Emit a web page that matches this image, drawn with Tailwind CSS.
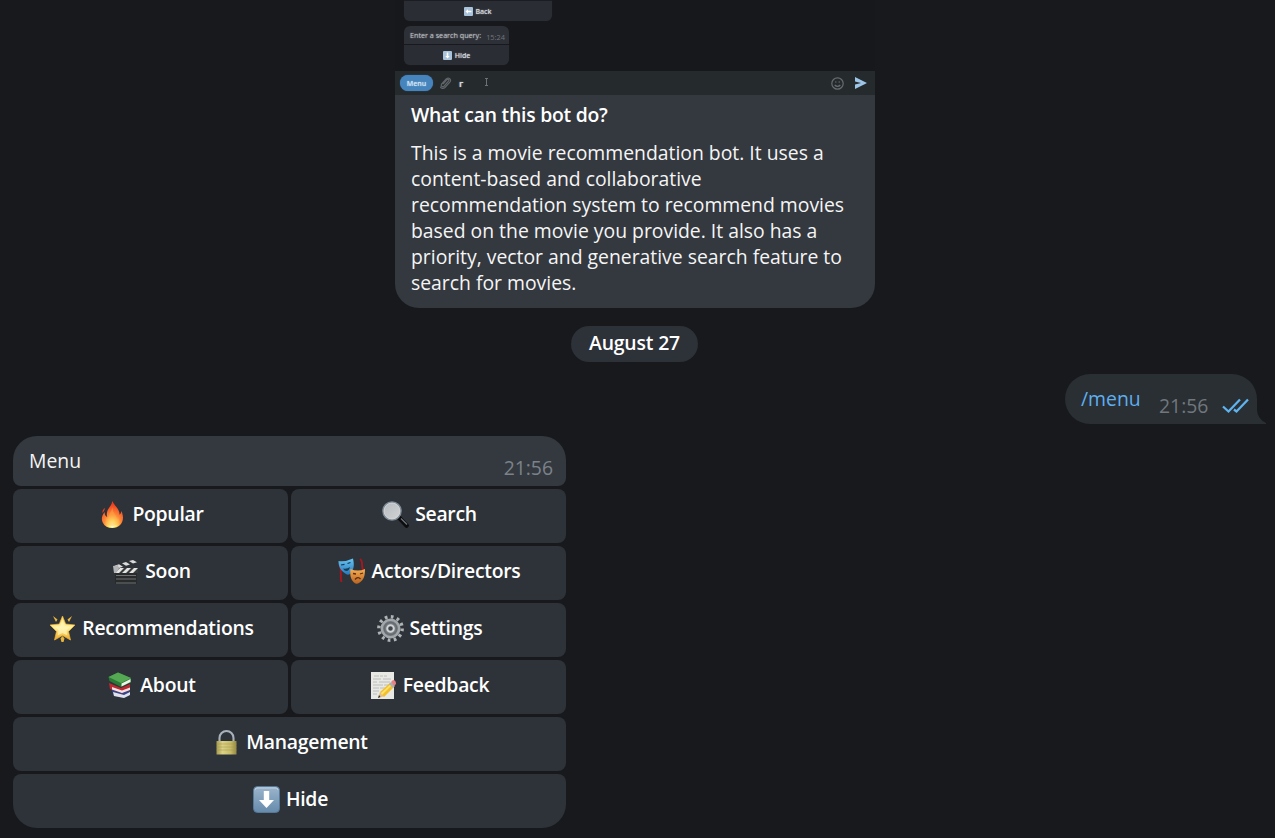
<!DOCTYPE html>
<html lang="en">
<head>
<meta charset="utf-8">
<title>Movie bot chat</title>
<script src="https://cdn.jsdelivr.net/npm/@tailwindcss/browser@4"></script>
</head>
<body class="bg-[#18191d]">
<main class="flex h-[838px] w-[1275px] flex-col overflow-hidden bg-[#18191d] font-['Open_Sans',sans-serif] text-[19.36px] leading-[26px] text-[#f5f5f5]">

  <!-- Bot description -->
  <section class="ml-[395px] h-[308px] w-[480px] shrink-0 overflow-hidden rounded-b-[24px] bg-[#34383f]">
    <div class="flex h-[95px] flex-col bg-[#17181c] text-[7px] font-semibold leading-none text-[#d2d5d9] [text-shadow:0_0_1.5px_rgb(255_255_255/0.55)]">
      <div class="ml-[9px] flex h-[21px] w-[148px] items-center justify-center gap-[2px] rounded-b-[6px] border-t border-[#1b1d22] bg-[#2a2d34] shadow-[0_0_1px_#2a2d34]">
        <svg class="size-[9px]" viewBox="0 0 9 9"><rect width="9" height="9" rx="1" fill="#a9c3da"/><path d="M1.5 4.5 4 2.3v1.4h3.4v1.6H4v1.4z" fill="#fff"/></svg>
        <span>Back</span>
      </div>
      <div class="mt-[5px] ml-[9px] flex h-[18px] w-[105px] justify-between rounded-t-[6px] bg-[#2d3036] pr-[4px] pl-[6px] font-normal">
        <span class="pt-[6px] text-[7.2px] whitespace-nowrap text-[#b9bcc0]">Enter a search query:</span>
        <span class="pt-[8px] text-[7.4px] text-[#70757c] [text-shadow:none]">15:24</span>
      </div>
      <div class="mt-px ml-[9px] flex h-[20px] w-[105px] items-center justify-center gap-[3px] rounded-b-[6px] bg-[#2a2d34] shadow-[0_0_1px_#2a2d34]">
        <svg class="size-[9px]" viewBox="0 0 9 9"><rect width="9" height="9" rx="1" fill="#a9c3da"/><path d="M4.5 7.6 2.3 5h1.4V1.5h1.6V5h1.4z" fill="#fff"/></svg>
        <span>Hide</span>
      </div>
      <div class="mt-auto flex h-[24px] items-center bg-[#252a2d] pl-[5px]">
        <span class="flex h-[16px] w-[33px] items-center justify-center rounded-full bg-[#4584bd] text-[7px] text-[#d3e5f5] shadow-[0_0_1px_#4584bd]">Menu</span>
        <svg class="ml-[6px] h-[14px] w-[13px]" viewBox="0 0 13 14" fill="none" stroke="#60656a" stroke-width="1.2"><path d="m4 8 4-4.3c1.3-1 2.4.4 1.5 1.5L5 10.2c-1.6 1.3-3.6-.4-2.3-2.2l4.5-5c2.6-2.4 5.6.7 3.6 3.2L6 11.5c-1.7 1.6-4.2 1-4.7-.8"/></svg>
        <span class="mt-[1px] ml-[7px] w-[5px] text-[9px] font-bold">г</span>
        <svg class="mb-[2px] ml-[20px] h-[8px] w-[5px]" viewBox="0 0 5 8" fill="none" stroke="#6c7175"><path d="M1 .5h3M2.500 .5v7M1 7.500h3"/></svg>
        <svg class="ml-auto size-[13px]" viewBox="0 0 13 13" fill="none" stroke="#676c70" stroke-width="1.2"><circle cx="6.500" cy="6.500" r="5.700"/><path d="M4 5h1.500M7.500 5H9M3.700 8c1.600 1.800 4 1.800 5.600 0"/></svg>
        <svg class="mr-[8px] ml-[11px] h-[12px] w-[12px]" viewBox="0 0 12 12"><path d="M0 0 12 6 0 12V7.500L6 6 0 4.500z" fill="#9cc5e8"/></svg>
      </div>
    </div>
    <div class="px-4 pt-[7px]">
      <h1 class="font-semibold tracking-[-0.24px] whitespace-nowrap text-white">What can this bot do?</h1>
      <p class="mt-[12px] whitespace-nowrap">This is a movie recommendation bot. It uses a<br>content-based and collaborative<br>recommendation system to recommend movies<br>based on the movie you provide. It also has a<br>priority, vector and generative search feature to<br>search for movies.</p>
    </div>
  </section>

  <!-- Date separator -->
  <div class="mt-[18px] ml-[571px] flex h-[36px] w-[127px] shrink-0 justify-center rounded-full bg-[#2d3138] pt-[4px] font-semibold tracking-[-0.15px] whitespace-nowrap text-white">August 27</div>

  <!-- Outgoing message -->
  <div class="mt-[12px] mr-[9px] flex h-[50px] shrink-0 justify-end">
    <div class="flex w-[192px] rounded-l-[25px] rounded-tr-[25px] bg-[#2a2f33] pl-4">
      <span class="mt-[12px] w-[78px] text-[#5eaff0]">/menu</span>
      <span class="mt-[19px] w-[63px] text-[#70777d]">21:56</span>
      <svg class="mt-[24px] h-[16px] w-[28px]" viewBox="0 0 28 16" fill="none" stroke="#5fb3ee" stroke-width="2.300"><path d="m1 8.500 5.500 5L18 1.500M12 11.500l2.500 2L26 1.500"/></svg>
    </div>
    <svg class="h-[50px] w-[9px]" viewBox="0 0 9 50"><path d="M0 25v25h9v-1C3 46 0 41 0 35z" fill="#2a2f33"/></svg>
  </div>

  <!-- Incoming menu -->
  <section class="mt-[12px] ml-[13px] flex w-[553px] shrink-0 flex-col gap-[3px]">
    <div class="flex h-[50px] justify-between rounded-t-[24px] rounded-b-[8px] bg-[#34393f] pr-[13px] pl-4">
      <span class="pt-[12px]">Menu</span><span class="pt-[19px] text-[#7b828a]">21:56</span>
    </div>
    <div class="grid grid-cols-2 gap-[3px] font-semibold tracking-[-0.26px] text-white [&>div]:flex [&>div]:h-[54px] [&>div]:justify-center [&>div]:rounded-[8px] [&>div]:bg-[#2e3339] [&>div]:pt-[12px] [&>div]:whitespace-nowrap [&_svg]:mr-[6px] [&_svg]:ml-[2px] [&_svg]:size-[27px]">
      <div>
        <svg viewBox="0 0 27 27"><defs><radialGradient id="fire" cx=".5" cy=".9" r=".8"><stop stop-color="#fffde0"/><stop offset=".2" stop-color="#ffe96b"/><stop offset=".5" stop-color="#ff8b38"/><stop offset="1" stop-color="#ee3a20"/></radialGradient></defs><path d="M13.300 0c-.3 4.500-4.500 7-5.300 11.500-.3 1.500-.3 3 .2 4.500C6 15 5.500 13 5.800 11 3 14 2 18 3.700 21.500c1.700 3.700 5.300 5.500 9.600 5.500 6.500 0 10.700-4.500 10.700-10.500 0-2.500-.8-5-1.700-6.500-.2 2-.7 3-1.700 3.700C20.700 7.500 15.500 5.500 13.300 0z" fill="url(#fire)"/><path d="M6 7c-1.800 1-2.800 2.800-2.500 5C4.500 10.500 5.500 9.500 6 7z" fill="#ed3e24"/><path d="M13.500 6c-.5 4-3 5.500-3.500 9-.4 3-2 4-3 2 0 5 2 8 6.500 8s7-3.500 6.500-8c-1 2-2 2-2.500 0-.5-4-4-5-4-11z" fill="#ffb34a" opacity=".4"/></svg>
        <span>Popular</span>
      </div>
      <div>
        <svg viewBox="0 0 27 27"><defs><linearGradient id="lens" x1="0" y1="0" x2="1" y2="1"><stop stop-color="#b6bbc0"/><stop offset="1" stop-color="#d2d3d4"/></linearGradient></defs><path d="m16.500 16 8 8.500" stroke="#0b0c0e" stroke-width="4.600" stroke-linecap="round"/><path d="m19 17.500 6 6" stroke="#70757b" stroke-width="1.200"/><circle cx="10" cy="10" r="8.900" fill="url(#lens)" stroke="#7f8a94" stroke-width="1.800"/><circle cx="10" cy="10" r="8" fill="none" stroke="#dfe3e6" stroke-width=".7"/></svg>
        <span>Search</span>
      </div>
      <div>
        <svg viewBox="0 0 27 27"><path d="M3 14h22v12H3z" fill="#292a2c"/><path d="m1 8 23-7 1 4L3 12z" fill="#313235"/><path d="m3 7.500 4-1.200 4 2.400-4 1.300zM10 5.300l4-1.200 4 2.300-4 1.300zM17 3.100 21 2l4 2.300-4 1.200z" fill="#dadbdc"/><path d="M3 10h23v5H3z" fill="#38393b"/><path d="M8 10h4l-5 5H3zM15 10h4l-5 5h-4zM22 10h4l-5 5h-4z" fill="#e3e3e3"/><path d="m1 8 5-1 1 4-3 4H2z" fill="#b2b4b6"/><path d="M4 17.500h20M4 21h20M4 25h20" stroke="#777a7c" stroke-width=".9"/></svg>
        <span>Soon</span>
      </div>
      <div>
        <svg viewBox="0 0 27 27"><defs><linearGradient id="blueMask" x2="0" y2="1"><stop stop-color="#69c4f2"/><stop offset="1" stop-color="#2678bd"/></linearGradient><linearGradient id="goldMask" x2="0" y2="1"><stop stop-color="#f7ae51"/><stop offset="1" stop-color="#ba6320"/></linearGradient></defs><path d="M1.500 6c3 7 0 12 2 18M22 1c3.500 2 1 7 3 11" fill="none" stroke="#a71720" stroke-width="1.900"/><path d="M.5 3q7 1 14.500-2.500c1 5 2 10-3 15.500-1 1-3 1-4 0C3 13 .5 9 .5 3z" fill="url(#blueMask)"/><path d="m3 7 3.500-.7M9.500 5.500l3-1" stroke="#123951" stroke-width="1.200"/><path d="M5 10.500q4 1 7-1.500-1 4-3.500 4-2 0-3.500-2.500z" fill="#173b51"/><path d="M12.500 11q7.500 3 14.500 0c0 7-1 11-6 14-2 1.500-4 .5-5-.5-4-4-4-8.500-3.500-13.500z" fill="url(#goldMask)"/><path d="m15 15.500 3 .5M22 16l3-1M17 21.500q3-3.500 5.500-.5" stroke="#5c2b12" stroke-width="1.300" fill="none"/></svg>
        <span>Actors/Directors</span>
      </div>
      <div>
        <svg viewBox="0 0 27 27"><defs><linearGradient id="star" x2="0" y2="1"><stop stop-color="#ffd66b"/><stop offset=".5" stop-color="#fff099"/><stop offset="1" stop-color="#efa51d"/></linearGradient></defs><path d="m13.500 1 3.200 8 9.300 1-6.500 6.500 2 8.500-8-4.500-8 4.500 2-8.500L1 10l9.300-1z" fill="url(#star)" stroke="#eeb43b" stroke-width=".7" stroke-linejoin="round"/><path d="m13.500 5 2.500 6 5 .7-3.500 3.800.8 5-4.800-2.500-4.800 2.500.8-5L6 11.700l5-.7z" fill="#fff7c0" opacity=".65"/><path d="m4 1 4.500 3.500L7 7zM23 1l-4.500 3.500L20 7zM13.500 21l2 2.500-1 3.500h-2l-1-3.500z" fill="#e9b43a"/></svg>
        <span>Recommendations</span>
      </div>
      <div>
        <svg viewBox="0 0 27 27"><circle cx="13.500" cy="13.500" r="11.700" fill="none" stroke="#aeb3b6" stroke-width="3.400" stroke-dasharray="2.700 3.426"/><circle cx="13.500" cy="13.500" r="8.700" fill="#757a80" stroke="#a1a7ab" stroke-width="2.600"/><circle cx="13.500" cy="13.500" r="6.200" fill="none" stroke="#656b71" stroke-width="1.300"/><circle cx="13.500" cy="13.500" r="3.300" fill="#41464d" stroke="#d0d4d6" stroke-width="2"/></svg>
        <span>Settings</span>
      </div>
      <div>
        <svg viewBox="0 0 27 27"><path d="m4 16 3 8 10 2 6-3v-4z" fill="#35468f"/><path d="m6 20 11 3 6-3v3l-6 3-10-2z" fill="#e0e1ea"/><path d="m2 11 12 5 9-4v6l-8 3-12-4z" fill="#bd2930"/><path d="m5 15 10 3.500 8-3v2.500l-8 3-10-3.500z" fill="#f3e4e4"/><path d="m1.500 5 9.500-4.500L24 6v4.500L14 15 2.500 9z" fill="#287a36"/><path d="M1.500 5 11 .5 24 6l-10 5z" fill="#55a952"/><path d="m14.500 11.500 9-4.500v3l-9 4.500z" fill="#eff5e9"/></svg>
        <span>About</span>
      </div>
      <div>
        <svg viewBox="0 0 27 27"><path d="M1 0h23v27H1z" fill="#e8e8e5"/><path d="M4 4h5m1 0h3m1 0h3M3 7h8m2 0h8M3 10h4m2 0h11M3 13h10m1 0h5M3 16h6m1 0h5M3 19h6M3 22h4" stroke="#b2b4b5" stroke-width=".8"/><path d="m8 26 2-6 5 4z" fill="#e3bd8b"/><path d="m10 20 10-9 4 4-10 10z" fill="#f3bf2d"/><path d="m11 21 10-9 1 1-10 10z" fill="#ffe36d"/><path d="m19 12 2-2 4 4-2 2z" fill="#aab0b4"/><path d="m21 10 2-2q3 0 3 4l-2 2z" fill="#e98183"/><path d="m8 26 1-3 1.500 2z" fill="#333"/></svg>
        <span>Feedback</span>
      </div>
      <div class="col-span-2">
        <svg viewBox="0 0 27 27"><defs><linearGradient id="lock"><stop stop-color="#a69b50"/><stop offset=".3" stop-color="#dcd184"/><stop offset=".7" stop-color="#c8bc6a"/><stop offset="1" stop-color="#948742"/></linearGradient></defs><path d="M6.500 13V9a7 7 0 0 1 14 0v4" fill="none" stroke="#a9b2bb" stroke-width="2.100"/><path d="M3.500 12h20v13.500h-20z" fill="url(#lock)"/><path d="M3.500 15h20M3.500 18h20M3.500 21h20" stroke="#a2964c" stroke-width=".5"/></svg>
        <span>Management</span>
      </div>
      <div class="col-span-2 rounded-b-[24px]!">
        <svg viewBox="0 0 27 27"><defs><linearGradient id="key" x2="0" y2="1"><stop stop-color="#9cb5cc"/><stop offset="1" stop-color="#668bab"/></linearGradient></defs><rect x=".5" y=".5" width="26" height="26" rx="4" fill="url(#key)" stroke="#56799a"/><path d="M2 4q0-2 2-2h19q2 0 2 2" fill="none" stroke="#c3d2df"/><path d="M10.800 5h5.400v9h4.800l-7.500 8L6 14h4.800z" fill="#fff"/></svg>
        <span>Hide</span>
      </div>
    </div>
  </section>
</main>
</body>
</html>
